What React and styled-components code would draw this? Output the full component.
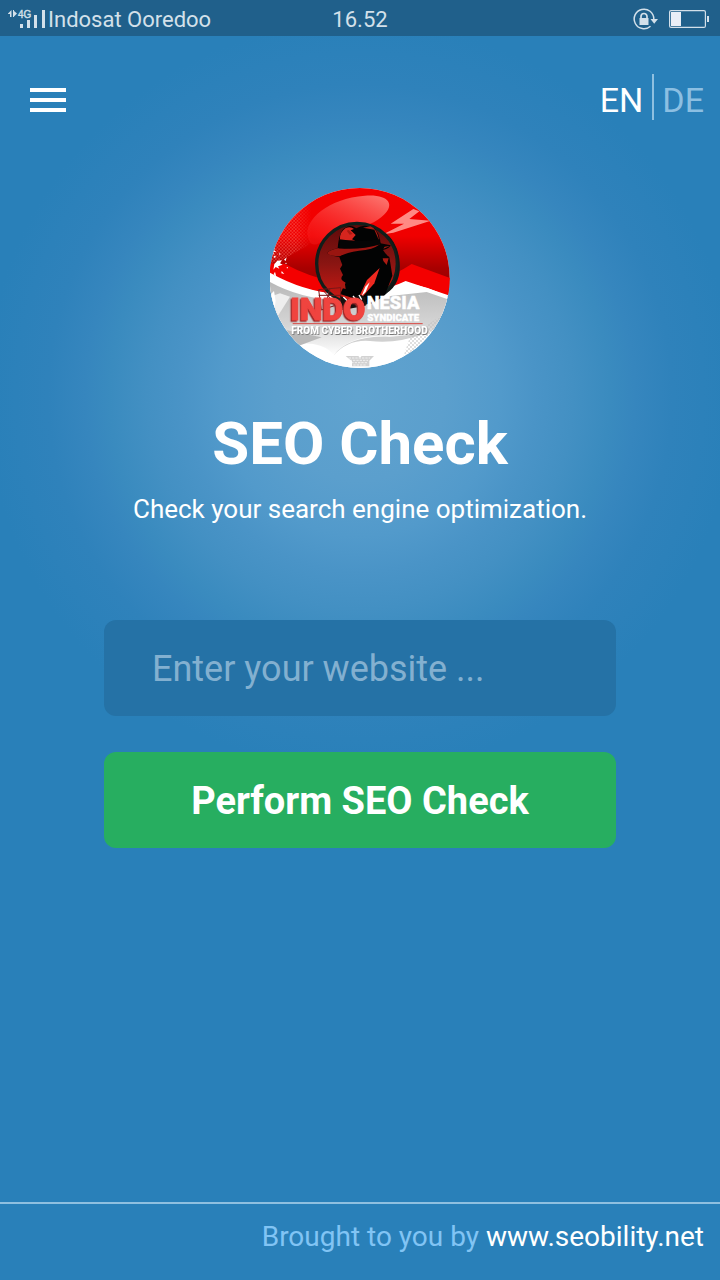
import React from "react";
import styled, { createGlobalStyle } from "styled-components";

const GlobalStyle = createGlobalStyle`
  *, *::before, *::after { box-sizing: border-box; }
  body { margin: 0; background: #2980b9; font-family: Roboto, "Liberation Sans", sans-serif; color: #fff; }
  h1, p { margin: 0; }
  a { color: inherit; text-decoration: none; }
`;

const Page = styled.div`
  min-height: 100vh;
  display: flex;
  flex-direction: column;
  background: radial-gradient(
    circle 375px at 50% 396px,
    #60a3cf 0px,
    #5b9fcd 85px,
    #529acb 140px,
    #4a94c7 176px,
    #4390c3 213px,
    #3a8bbf 250px,
    #3686be 275px,
    #2f82bb 312px,
    #2980b9 375px
  ) #2980b9;
`;

const StatusBar = styled.div`
  display: grid;
  grid-template-columns: 1fr auto 1fr;
  align-items: center;
  height: 36px;
  padding: 0 11px;
  background: #20608b;
  color: #d3e0ea;
  font-size: 22px;
  line-height: 36px;
`;

const StatusGroup = styled.div`
  display: flex;
  align-items: center;
  justify-content: ${(p) => (p.$end ? "flex-end" : "flex-start")};
  gap: ${(p) => (p.$end ? "10px" : "2px")};
  height: 36px;
`;

const StatusText = styled.span`
  padding-top: 2px;
`;

const Header = styled.header`
  display: flex;
  justify-content: space-between;
  align-items: flex-end;
  padding: 38px 16px 0 30px;
`;

const MenuButton = styled.button`
  display: flex;
  flex-direction: column;
  justify-content: center;
  gap: 6px;
  width: 36px;
  height: 40px;
  padding: 0;
  border: 0;
  background: none;
  cursor: pointer;
`;

const MenuBar = styled.span`
  height: 4px;
  background: #fff;
`;

const Languages = styled.nav`
  display: flex;
`;

const Language = styled.a`
  padding: 6px 0 0;
  font-size: 34px;
  line-height: 40px;
  color: #8cbfe2;

  &[aria-current] { color: #fff; }
  & + & {
    margin-left: 9px;
    padding-left: 8px;
    border-left: 2px solid #8fc0e0;
  }
`;

const Main = styled.main`
  flex: 1;
  display: flex;
  flex-direction: column;
  align-items: center;
  padding: 68px 24px 40px;
`;

const Title = styled.h1`
  margin-top: 41px;
  font-size: 60px;
  font-weight: 700;
  line-height: 70px;
`;

const Subtitle = styled.p`
  margin-top: 14px;
  font-size: 26px;
  line-height: 32px;
  text-align: center;
`;

const Form = styled.form`
  display: flex;
  flex-direction: column;
  gap: 36px;
  width: 100%;
  max-width: 512px;
  margin-top: 95px;
`;

const Field = styled.input`
  width: 100%;
  height: 96px;
  padding: 2px 48px 0;
  border: 0;
  border-radius: 12px;
  background: #2572a6;
  color: #fff;
  font: 400 36px Roboto, "Liberation Sans", sans-serif;

  &::placeholder { color: #83b0d0; opacity: 1; }
`;

const Submit = styled.button`
  height: 96px;
  padding: 2px 24px 0;
  border: 0;
  border-radius: 12px;
  background: #27ae60;
  color: #fff;
  font: 700 38px Roboto, "Liberation Sans", sans-serif;
  cursor: pointer;
`;

const Footer = styled.footer`
  padding: 13px 16px 23px;
  border-top: 2px solid #8fc0e0;
  color: #81c4f4;
  font-size: 28px;
  line-height: 40px;
  text-align: right;
`;

const FooterLink = styled.a`
  && { color: #fff; }
`;

const SignalSvg = styled.svg`
  overflow: visible;
`;

const SignalIcon = () => (
  <SignalSvg width="35" height="36" viewBox="3 0 35 36" fill="#d3e0ea" aria-label="4G signal">
    <path d="M0 12.500L3.500 9v7H2v-3H0zM5 9h1v7H5zM6 10l3 2.500-3 3z" />
    <text x="10" y="17" fontSize="10" stroke="#d3e0ea" strokeWidth=".4" fontFamily="Liberation Sans, sans-serif">4G</text>
    <path d="M12 23h3v4h-3zM19 19h3v8h-3zM26 14h3v13h-3zM34 9h3v18h-3z" />
  </SignalSvg>
);

const RotationLockIcon = () => (
  <svg width="26" height="24" viewBox="0 0 26 24" fill="none" aria-label="Rotation lock">
    <path d="M17.500 19.300A9.800 9.800 0 1 1 20.800 12" stroke="#d3e0ea" strokeWidth="1.500" />
    <path d="M17.500 12h7.500l-3.800 4.800z" fill="#d3e0ea" />
    <path d="M6.500 11h9v7h-9z" fill="#d3e0ea" />
    <path d="M8 12V9.500a3 3 0 0 1 6 0V12" stroke="#d3e0ea" strokeWidth="1.700" />
  </svg>
);

const BatteryIcon = () => (
  <svg width="40" height="18" viewBox="0 0 40 18" fill="none" aria-label="Battery">
    <rect x=".6" y=".6" width="35.800" height="16.800" rx="1.500" stroke="#d3e0ea" strokeWidth="1.200" />
    <path d="M2 2h10v14H2z" fill="#e9eef7" />
    <path d="M38 6h2v6h-2z" fill="#d3e0ea" />
  </svg>
);

const Logo = () => (
  <svg width="180" height="180" viewBox="30 24 540 540" role="img" aria-label="Indonesia Syndicate">
    <defs>
      <clipPath id="disc"><circle cx="299" cy="294" r="270" /></clipPath>
      <linearGradient id="red" x1="0" y1="0" x2="0" y2="1">
        <stop offset="0" stopColor="#f50000" />
        <stop offset=".45" stopColor="#f00000" />
        <stop offset=".75" stopColor="#a80000" />
        <stop offset="1" stopColor="#8e0000" />
      </linearGradient>
      <linearGradient id="gloss" x1="1" y1="0" x2=".2" y2="1">
        <stop offset="0" stopColor="#ff9c94" stopOpacity=".8" />
        <stop offset="1" stopColor="#f33" stopOpacity=".25" />
      </linearGradient>
      <linearGradient id="grey" x1="0" y1="0" x2="0" y2="1">
        <stop offset="0" stopColor="#b9b9b9" />
        <stop offset=".6" stopColor="#d6d6d6" />
        <stop offset="1" stopColor="#fff" />
      </linearGradient>
      <linearGradient id="fade" x1="0" y1="0" x2="1" y2="0">
        <stop offset="0" stopColor="#fff" />
        <stop offset=".6" stopColor="#fff" />
        <stop offset="1" stopColor="#000" />
      </linearGradient>
      <mask id="dotFade"><path d="M30 40h125v220H30z" fill="url(#fade)" /></mask>
      <linearGradient id="coat" x1="0" y1="0" x2="0" y2="1">
        <stop offset="0" stopColor="#5d0a0a" />
        <stop offset=".5" stopColor="#8a1512" />
        <stop offset="1" stopColor="#d51a14" />
      </linearGradient>
      <pattern id="redDots" width="10" height="10" patternUnits="userSpaceOnUse">
        <circle cx="2.500" cy="2.500" r="2.200" fill="#ff7770" />
        <circle cx="7.500" cy="7.500" r="2.200" fill="#ff7770" />
      </pattern>
      <pattern id="greyDots" width="12" height="12" patternUnits="userSpaceOnUse">
        <circle cx="3" cy="3" r="3" fill="#bdbdbd" />
        <circle cx="9" cy="9" r="3" fill="#bdbdbd" />
      </pattern>
    </defs>
    <g clipPath="url(#disc)">
      <path d="M30 24h540v540H30z" fill="#fff" />
      <path d="M30 24h540v320Q480 305 430 316Q320 354 210 338Q105 325 30 280z" fill="url(#red)" />
      <path d="M30 250L75 252Q145 290 225 306Q340 327 455 252L570 294V354Q480 305 430 316Q330 354 220 342Q120 332 30 286z" fill="#f40000" />
      <path d="M30 110L155 45V190L65 240L30 250z" fill="url(#redDots)" opacity=".65" mask="url(#dotFade)" />
      <path d="M144 170C130 120 205 55 315 47C387 42 405 74 372 104C325 152 230 148 180 188Q150 205 144 170z" fill="url(#gloss)" />
      <path d="M370 163L432 131H392L460 87L478 94L448 117L512 122L400 158z" fill="#ff8a84" />
      <path d="M30 278Q130 334 235 342Q350 344 437 303L570 347V564H30z" fill="#fff" />
      <path d="M30 306Q120 356 240 362L370 350L500 336L570 360V430L470 470Q270 450 222 526Q205 500 160 492Q100 485 30 500z" fill="url(#grey)" />
      <path d="M60 340L90 350L40 430L30 350z" fill="#eee" />
      <path d="M30 440L185 472L115 498L30 526z" fill="#b9b9b9" />
      <path d="M220 527Q265 466 390 470L490 462Q410 492 330 483Q265 477 220 527z" fill="#d0d0d0" />
      <path d="M450 470L560 395V470L480 542L430 530z" fill="url(#greyDots)" opacity=".65" />
      <g fill="#fff">
        <path d="M36 208l9-8-3 11 7 4-10 2 4 7-9-5zM52 242l14-1-6 9 8 4-14 5 4 7-11-5-7 8 3-17zM72 239l8-7-3 11zM65 273l8 9-9-2zM45 275l4 15-8-7zM30 345l12-12 5 29-4 28-13-10z" />
        <circle cx="78" cy="250" r="2" /><circle cx="59" cy="222" r="2" />
        <circle cx="82" cy="263" r="2" /><circle cx="44" cy="230" r="3" />
      </g>

      <circle cx="291" cy="251" r="121" fill="url(#coat)" stroke="#111e1a" strokeWidth="10" />
      <path d="M374 157Q416 201 414 257Q410 310 366 347Q425 320 419 246Q414 187 374 157z" fill="#111716" />
      <path d="M202 221Q201 212 233 205Q237 153 256 143Q270 132 289 145Q312 129 342 145Q357 155 361 190L392 196Q391 204 369 210Q378 225 388 231L397 287L375 345L333 371L240 342L257 308Q236 299 249 285L240 266L247 255L238 231Q223 230 202 221z" fill="#020303" />
      <path d="M202 221Q201 212 233 205Q288 206 361 192Q338 210 297 212Q257 218 240 229Q217 230 202 221z" fill="#991510" />
      <path d="M240 176Q239 157 257 144Q273 139 282 147L272 151L287 165L276 178L286 182L239 181z" fill="#d6251e" />
      <path d="M309 143L331 139Q352 145 358 184L343 149zM370 206l20-8-16 2zM368 235l18 0-6 20-10-12zM254 306l-16 16 19 5zM260 152l9 12 9-2-12-12z" fill="#a91b13" />
      <path d="M239 178Q295 188 360 178L362 193Q300 211 237 205z" fill="#050505" />
      <path d="M300 344L321 300L359 264L343 310L309 349z" fill="#ee2920" />
      <path d="M305 348l11-28 13-13-12 29z" fill="#fff" />
      <path d="M176 329l66-6v48l-58 19zM190 332l40 44M210 325l-15 55M176 346h67" fill="none" stroke="#781818" strokeWidth="3" />
      <path d="M241 348l32 15 25-20 19 9v25l-74 14z" fill="#141010" />
      <path d="M250 351l16 15M279 348l10 12M297 345l8 14" stroke="#fff" strokeWidth="4" />

      <g fontFamily="Roboto, Liberation Sans, sans-serif" fontWeight="900">
        <text x="91" y="419" fontSize="96" fill="#f0443f" stroke="#f0443f" strokeWidth="3" filter="drop-shadow(-4px 4px 0px #a02828)">INDO</text>
        <g fill="#fff" stroke="#fff" strokeWidth="1">
          <text x="320" y="388" fontSize="55">NESIA</text>
          <text x="322" y="424" fontSize="29">SYNDICATE</text>
        </g>
        <text x="94" y="461" fontSize="30" fill="#fff" filter="drop-shadow(2px 3px 1px #777)">FROM CYBER BROTHERHOOD</text>
      </g>
      <path d="M98 431H488" stroke="#d94642" strokeWidth="3" />
      <path d="M257 528h38l5 5 5-5h37l-14 14v17h-52v-15z" fill="#d2d2d2" />
      <path d="M266 534l64 0M269 541h55M274 548h48M280 555h40" stroke="#fff" strokeWidth="2" strokeDasharray="7 3" />
    </g>
  </svg>
);

export default function App() {
  return (
    <Page>
      <GlobalStyle />
      <StatusBar>
        <StatusGroup>
          <SignalIcon />
          <StatusText>Indosat Ooredoo</StatusText>
        </StatusGroup>
        <StatusText>16.52</StatusText>
        <StatusGroup $end>
          <RotationLockIcon />
          <BatteryIcon />
        </StatusGroup>
      </StatusBar>
      <Header>
        <MenuButton type="button" aria-label="Menu">
          <MenuBar />
          <MenuBar />
          <MenuBar />
        </MenuButton>
        <Languages aria-label="Language">
          <Language href="#en" aria-current="true">EN</Language>
          <Language href="#de">DE</Language>
        </Languages>
      </Header>
      <Main>
        <Logo />
        <Title>SEO Check</Title>
        <Subtitle>Check your search engine optimization.</Subtitle>
        <Form onSubmit={(e) => e.preventDefault()}>
          <Field type="text" aria-label="Website" placeholder="Enter your website ..." />
          <Submit type="submit">Perform SEO Check</Submit>
        </Form>
      </Main>
      <Footer>
        Brought to you by <FooterLink href="#seobility">www.seobility.net</FooterLink>
      </Footer>
    </Page>
  );
}
